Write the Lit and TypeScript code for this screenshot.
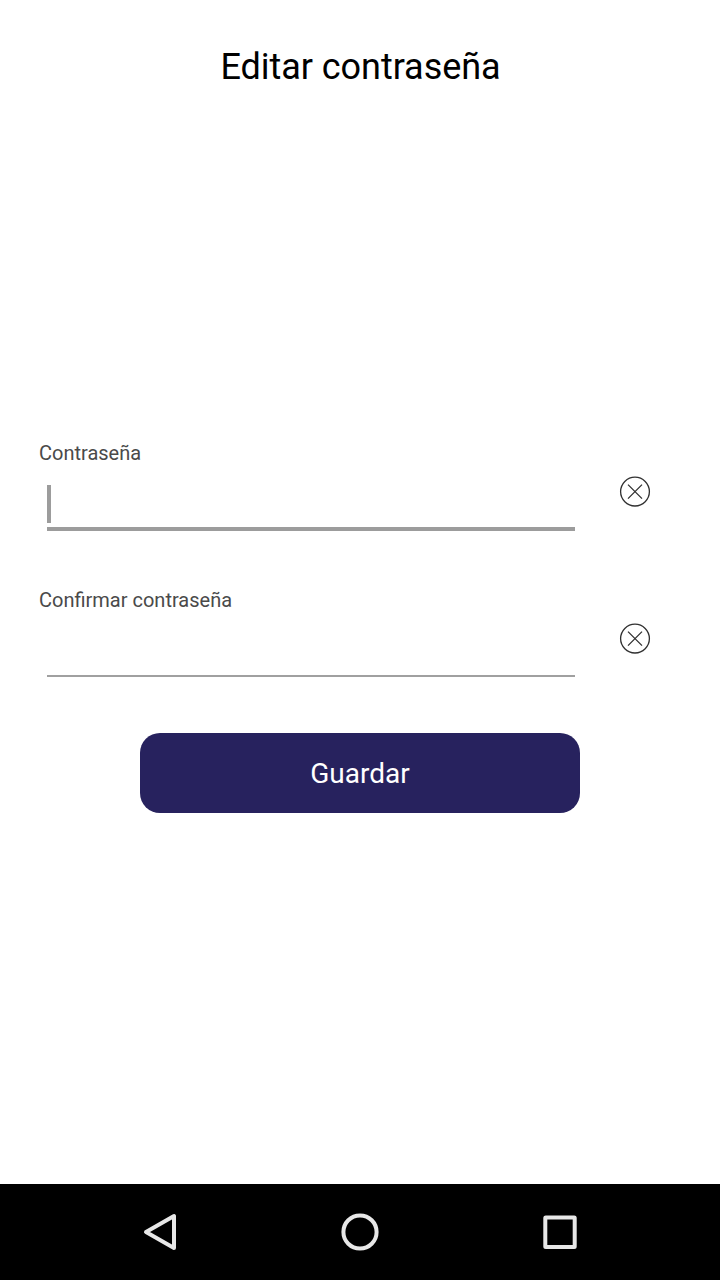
import { LitElement, html, css } from "lit";
import { customElement, property } from "lit/decorators.js";

@customElement("password-field")
class PasswordField extends LitElement {
  @property() label = "";
  @property({ type: Boolean }) active = false;

  static styles = css`
    :host { display: block; height: 147px; }
    .label { box-sizing: border-box; height: 24px; padding-top: 1px; line-height: 24px; font-size: 20px; color: #4a4a4a; white-space: nowrap; }
    .row { display: flex; align-items: flex-start; justify-content: space-between; padding: 0 70px 0 8px; }
    .input { box-sizing: border-box; width: 528px; height: 66px; padding-top: 21px; border-bottom: 2px solid #a0a0a0; margin-right: 44px; }
    .input.active { height: 67px; border-bottom: 4px solid #9c9c9c; }
    .caret { width: 4px; height: 38px; background: #9c9c9c; }
    .clear { display: block; width: 32px; height: 32px; margin-top: 12px; margin-right: -1px; flex: none; }
  `;

  render() {
    return html`
      <div class="label">${this.label}</div>
      <div class="row">
        <div class="input ${this.active ? "active" : ""}">
          ${this.active ? html`<div class="caret"></div>` : ""}
        </div>
        <svg class="clear" viewBox="0 0 32 32" fill="none" stroke="#303030" stroke-width="1.3">
          <circle cx="16" cy="15.6" r="14.4" />
          <path d="M9 8.6 23 22.6M23 8.6 9 22.6" />
        </svg>
      </div>
    `;
  }
}

@customElement("app-root")
class AppRoot extends LitElement {
  static styles = css`
    :host { display: flex; flex-direction: column; width: 720px; height: 1280px; background: #fff; font-family: Roboto, sans-serif; overflow: hidden; }
    .title { margin: 0; height: 440px; box-sizing: border-box; padding: 46px 0 0 1px; line-height: 42px; font-size: 36px; letter-spacing: -0.04px; font-weight: 400; text-align: center; color: #000; }
    .form { flex: 1; padding-left: 39px; }
    .save { display: block; width: 440px; height: 80px; margin: -1.5px 0 0 101px; padding: 2px 0 0; border: 0; border-radius: 20px; background: #27225e; color: #fff; font: 400 28px/34px Roboto, sans-serif; }
    .nav { height: 96px; background: #000; display: flex; align-items: center; justify-content: center; gap: 152px; }
    .nav svg { display: block; width: 48px; height: 48px; fill: none; stroke: #e8e8e8; stroke-width: 4; stroke-linejoin: round; }
  `;

  render() {
    return html`
      <h1 class="title">Editar contraseña</h1>
      <div class="form">
        <password-field label="Contraseña" active></password-field>
        <password-field label="Confirmar contraseña"></password-field>
        <button class="save">Guardar</button>
      </div>
      <div class="nav">
        <svg viewBox="0 0 48 48"><path d="M38 8V40L10 24Z" /></svg>
        <svg viewBox="0 0 48 48"><circle cx="24" cy="24" r="16.6" /></svg>
        <svg viewBox="0 0 48 48"><rect x="9.3" y="9.5" width="29.4" height="29.5" rx="0.5" /></svg>
      </div>
    `;
  }
}
